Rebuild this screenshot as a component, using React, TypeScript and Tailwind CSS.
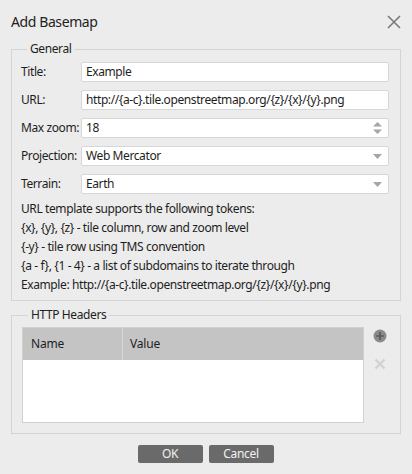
import React from "react";

const font = { fontFamily: '"Noto Sans", "Open Sans", sans-serif' };

function Input({ value, right }: { value: string; right?: React.ReactNode }) {
  return (
    <div className="flex-1 h-[20px] bg-white border border-[#d7d7d7] rounded-[2px] flex items-center pl-[4px] pr-[6px]">
      <span className="flex-1 text-[12px] leading-[18px] tracking-[-0.4px] text-[#1e1e1e] whitespace-nowrap">{value}</span>
      {right}
    </div>
  );
}

function Row({ label, children }: { label: string; children: React.ReactNode }) {
  return (
    <div className="flex items-center h-[20px]">
      <div className="w-[60px] shrink-0 whitespace-nowrap text-[12px] tracking-[-0.4px] text-[#1e1e1e] leading-[18px]">{label}</div>
      {children}
    </div>
  );
}

const DropArrow = () => (
  <svg width="9" height="5" viewBox="0 0 9 5">
    <path d="M0 0 H9 L4.5 5 Z" fill="#a6a6a6" />
  </svg>
);

const Spin = () => (
  <svg width="9" height="12" viewBox="0 0 9 12">
    <path d="M0 4.5 L4.5 0 L9 4.5 Z" fill="#a6a6a6" />
    <path d="M0 7.5 H9 L4.5 12 Z" fill="#a6a6a6" />
  </svg>
);

export default function App() {
  return (
    <div className="w-[412px] h-[474px] bg-[#ececec] flex flex-col text-[#1e1e1e] overflow-hidden" style={font}>
      <div className="h-[41px] shrink-0 flex items-start justify-between pl-[11px] pr-[11px] pt-[11px]">
        <span className="text-[14px] leading-[22px] tracking-[-0.4px] text-[#1e1e1e]">Add Basemap</span>
        <svg width="14" height="14" viewBox="0 0 14 14" className="mt-[4px]">
          <path d="M1 1 L13 13 M13 1 L1 13" stroke="#7a7a7a" strokeWidth="1.6" />
        </svg>
      </div>

      <fieldset className="mx-[11px] border border-[#d4d4d4] pl-[9px] pr-[11px] pt-[5px] pb-[6px]">
        <legend className="ml-[6px] px-[3px] text-[12px] leading-[16px] tracking-[-0.4px]">General</legend>
        <div className="flex flex-col gap-[8px]">
          <Row label="Title:">
            <Input value="Example" />
          </Row>
          <Row label="URL:">
            <Input value="http://{a-c}.tile.openstreetmap.org/{z}/{x}/{y}.png" />
          </Row>
          <Row label="Max zoom:">
            <Input value="18" right={<Spin />} />
          </Row>
          <Row label="Projection:">
            <Input value="Web Mercator" right={<DropArrow />} />
          </Row>
          <Row label="Terrain:">
            <Input value="Earth" right={<DropArrow />} />
          </Row>
        </div>
        <div className="mt-[5px] text-[12px] leading-[19px] tracking-[-0.4px] whitespace-nowrap">
          <div>URL template supports the following tokens:</div>
          <div>{"{x}, {y}, {z} - tile column, row and zoom level"}</div>
          <div>{"{-y} - tile row using TMS convention"}</div>
          <div>{"{a - f}, {1 - 4} - a list of subdomains to iterate through"}</div>
          <div>{"Example: http://{a-c}.tile.openstreetmap.org/{z}/{x}/{y}.png"}</div>
        </div>
      </fieldset>

      <fieldset className="mx-[11px] mt-[6px] border border-[#d4d4d4] pl-[10px] pr-[10px] pt-[4px] pb-[10px]">
        <legend className="ml-[6px] px-[3px] text-[12px] leading-[16px] tracking-[-0.4px]">HTTP Headers</legend>
        <div className="flex gap-[9px]">
          <div className="w-[342px] h-[96px] bg-white border border-[#d0d0d0] flex flex-col">
            <div className="h-[32px] bg-[#c4c4c4] flex text-[12px] tracking-[-0.2px]">
              <div className="w-[100px] border-r border-[#d6d6d6] flex items-center pl-[8px]">Name</div>
              <div className="flex-1 flex items-center pl-[7px]">Value</div>
            </div>
          </div>
          <div className="flex flex-col items-center w-[14px] pt-[2px] gap-[15px]">
            <svg width="14" height="14" viewBox="0 0 14 14">
              <circle cx="7" cy="7" r="6.5" fill="#8b8b8b" />
              <path d="M7 3 V11 M3 7 H11" stroke="#4a4a4a" strokeWidth="1.2" />
            </svg>
            <svg width="12" height="12" viewBox="0 0 12 12">
              <path d="M1.5 1.5 L10.5 10.5 M10.5 1.5 L1.5 10.5" stroke="#d2d2d2" strokeWidth="2.4" />
            </svg>
          </div>
        </div>
      </fieldset>

      <div className="flex justify-center gap-[6px] mt-[11px] pr-[1px]">
        <div className="w-[65px] h-[18px] bg-[#6a6a6a] rounded-[2px] text-[#f2f2f2] text-[12px] leading-[18px] tracking-[-0.3px] text-center">OK</div>
        <div className="w-[65px] h-[18px] bg-[#6a6a6a] rounded-[2px] text-[#f2f2f2] text-[12px] leading-[18px] tracking-[-0.3px] text-center">Cancel</div>
      </div>
    </div>
  );
}
